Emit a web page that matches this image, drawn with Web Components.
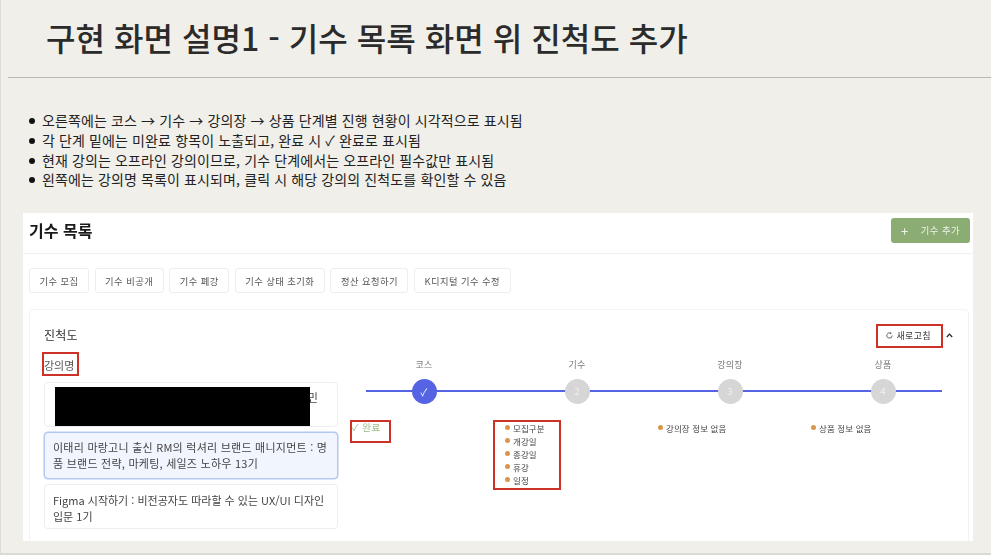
<!DOCTYPE html>
<html lang="ko">
<head>
<meta charset="utf-8">
<title>구현 화면 설명1</title>
<style>
  html, body { margin: 0; height: 100%; }
  body {
    width: 991px; height: 555px; overflow: hidden; box-sizing: border-box;
    background: #f0efea; color: #222;
    font-family: "Noto Sans CJK KR", "Noto Sans", sans-serif;
    border-left: 1px solid #dcdcd8; border-bottom: 2px solid #d9d9d5;
  }
</style>
</head>
<body>
<slide-title>구현 화면 설명1 - 기수 목록 화면 위 진척도 추가</slide-title>
<bullet-list>
  <li>오른쪽에는 코스 → 기수 → 강의장 → 상품 단계별 진행 현황이 시각적으로 표시됨</li>
  <li>각 단계 밑에는 미완료 항목이 노출되고, 완료 시 ✓ 완료로 표시됨</li>
  <li>현재 강의는 오프라인 강의이므로, 기수 단계에서는 오프라인 필수값만 표시됨</li>
  <li>왼쪽에는 강의명 목록이 표시되며, 클릭 시 해당 강의의 진척도를 확인할 수 있음</li>
</bullet-list>
<cohort-screen></cohort-screen>

<script>
class SlideTitle extends HTMLElement {
  constructor() {
    super();
    this.attachShadow({ mode: 'open' }).innerHTML = `
      <style>
        :host { display: block; margin-left: 7px; height: 77px; border-bottom: 1px solid #b9b9b4; box-sizing: content-box; }
        h1 { margin: 0; padding: 14px 0 0 38px; font-size: 32.1px; line-height: 46px; font-weight: 500; color: #2b2b2b; white-space: nowrap; }
      </style>
      <h1><slot></slot></h1>`;
  }
}
customElements.define('slide-title', SlideTitle);

class BulletList extends HTMLElement {
  constructor() {
    super();
    this.attachShadow({ mode: 'open' }).innerHTML = `
      <style>
        :host { display: block; padding: 33px 0 0 28px; height: 102px; box-sizing: content-box; }
        ::slotted(li) { list-style: none; font-size: 14px; line-height: 19.8px; color: #222; position: relative; padding-left: 13px; letter-spacing: .12px; white-space: nowrap; }
        ::slotted(li)::before { content: ""; position: absolute; left: 0; top: 7px; width: 6px; height: 6px; border-radius: 50%; background: #111; }
      </style>
      <slot></slot>`;
  }
}
customElements.define('bullet-list', BulletList);

class TagButton extends HTMLElement {
  constructor() {
    super();
    this.attachShadow({ mode: 'open' }).innerHTML = `
      <style>
        :host { display: inline-flex; align-items: center; height: 25px; padding: 0 9.5px; box-sizing: border-box; background: #fff; border: 1px solid #eeeeee; border-radius: 3px; font-size: 9.3px; letter-spacing: .45px; color: #555; white-space: nowrap; }
      </style>
      <slot></slot>`;
  }
}
customElements.define('tag-button', TagButton);

class RedBox extends HTMLElement {
  constructor() {
    super();
    this.attachShadow({ mode: 'open' }).innerHTML = `
      <style>
        :host { position: absolute; box-sizing: border-box; border: 2px solid #cc3226; pointer-events: none; }
      </style>`;
  }
}
customElements.define('red-box', RedBox);

class CourseCard extends HTMLElement {
  constructor() {
    super();
    this.attachShadow({ mode: 'open' }).innerHTML = `
      <style>
        :host { display: block; box-sizing: border-box; padding: 7px 8px; background: #fff; border: 1px solid #eeeeee; border-radius: 4px; font-size: 11px; line-height: 15.5px; letter-spacing: .24px; color: #444; }
        :host([active]) { background: #f1f5fe; border: 1px solid #b3c8f2; box-shadow: 0 0 0 .5px #b3c8f2; height: 47px; padding: 7px 8px; }
      </style>
      <slot></slot>`;
  }
}
customElements.define('course-card', CourseCard);

class StepItem extends HTMLElement {
  constructor() {
    super();
    this.attachShadow({ mode: 'open' }).innerHTML = `
      <style>
        :host { display: block; width: 153px; position: relative; }
        .label { height: 16px; line-height: 16px; font-size: 9px; letter-spacing: .3px; color: #777; text-align: center; }
        .circle { width: 25px; height: 25px; margin: 6px auto 0; border-radius: 50%; background: #d6d6d6; color: #f1f1f1; font-size: 9px; line-height: 25px; text-align: center; position: relative; }
        :host([done]) .circle { background: #5664e4; color: #fff; font-size: 10px; }
        .detail { margin-top: 17px; padding-left: 4.5px; }
      </style>
      <div class="label"></div>
      <div class="circle"></div>
      <div class="detail"><slot></slot></div>`;
    this.shadowRoot.querySelector('.label').textContent = this.getAttribute('label');
    this.shadowRoot.querySelector('.circle').textContent = this.getAttribute('mark');
  }
}
customElements.define('step-item', StepItem);

class MissingItem extends HTMLElement {
  constructor() {
    super();
    this.attachShadow({ mode: 'open' }).innerHTML = `
      <style>
        :host { display: flex; align-items: center; gap: 3px; height: 13px; font-size: 8.5px; letter-spacing: .1px; color: #444; white-space: nowrap; }
        i { width: 5px; height: 5px; border-radius: 50%; background: #d9964a; flex: none; }
      </style>
      <i></i><slot></slot>`;
  }
}
customElements.define('missing-item', MissingItem);

class CohortScreen extends HTMLElement {
  constructor() {
    super();
    this.attachShadow({ mode: 'open' }).innerHTML = `
      <style>
        :host { display: block; width: 950px; height: 328px; margin-left: 22px; background: #fff; position: relative; overflow: hidden; color: #222; filter: blur(.25px); }
        .head { box-sizing: border-box; display: flex; align-items: center; justify-content: space-between; padding: 0 3px 0 6px; border-bottom: 1px solid #f0f0f0; height: 41px; }
        .head b { font-size: 16px; font-weight: 700; color: #1a1a1a; margin-top: -7px; }
        .add { width: 79px; height: 25px; margin-top: -6px; background: #8bad74; border-radius: 3px; color: #eef3e9; font-size: 9.3px; letter-spacing: .5px; display: flex; align-items: center; gap: 12px; padding-left: 10px; box-sizing: border-box; }
        .add span:first-child { font-size: 13px; line-height: 1; }
        .tags { display: flex; gap: 5.5px; padding: 14px 6px 0; }
        .panel { position: absolute; left: 6px; top: 96px; width: 940px; height: 240px; box-sizing: border-box; border: 1px solid #f3f3f3; border-radius: 4px; padding: 0 14px; }
        .top { display: flex; align-items: center; justify-content: space-between; height: 48px; box-sizing: border-box; }
        .top > span { font-size: 12px; color: #333; letter-spacing: .2px; }
        .tools { display: flex; align-items: center; font-size: 9px; color: #333; letter-spacing: .35px; margin-top: 2px; }
        .tools .ref { display: flex; align-items: center; gap: 3px; margin-right: 15px; white-space: nowrap; }
        .tools .ref svg { display: block; }
        .tools .chev { display: block; margin-right: 1px; }
        .body { display: flex; }
        .left { width: 294px; flex: none; margin-top: 0; }
        .left > div.cap { font-size: 11px; line-height: 15px; color: #555; height: 20px; }
        .cards { display: flex; flex-direction: column; gap: 5px; margin-top: 4px; }
        .cards course-card:nth-child(1) { height: 45px; text-align: right; position: relative; padding-right: 19px; }
        .cards course-card:nth-child(3) { height: 45px; padding-top: 8px; letter-spacing: 0; }
        .right { margin-left: 9.5px; position: relative; margin-top: -1px; }
        .line { position: absolute; left: 18.5px; top: 33px; width: 576px; height: 2px; background: #5664e4; }
        .steps { display: flex; position: relative; }
        .ok { font-size: 9.5px; color: #9cbe88; letter-spacing: .5px; line-height: 13px; margin-top: 1px; }
        .mask { position: absolute; left: 10px; top: 4px; width: 255px; height: 39px; background: #000; }
      </style>
      <div class="head">
        <b>기수 목록</b>
        <div class="add"><span>+</span><span>기수 추가</span></div>
      </div>
      <div class="tags">
        <tag-button>기수 모집</tag-button>
        <tag-button>기수 비공개</tag-button>
        <tag-button>기수 폐강</tag-button>
        <tag-button>기수 상태 초기화</tag-button>
        <tag-button>정산 요청하기</tag-button>
        <tag-button>K디지털 기수 수정</tag-button>
      </div>
      <div class="panel">
        <div class="top">
          <span>진척도</span>
          <div class="tools">
            <div class="ref">
              <svg width="7" height="7" viewBox="0 0 8 8"><path d="M5.4 1.3A3 3 0 1 0 7 4" fill="none" stroke="#555" stroke-width="1"/><path d="M5 0 6.6 1.8 4.6 2.6Z" fill="#555"/></svg>
              <span>새로고침</span>
            </div>
            <svg class="chev" width="7" height="5" viewBox="0 0 7 5"><path d="M.8 4 3.5 1.2 6.2 4" fill="none" stroke="#222" stroke-width="1.2"/></svg>
          </div>
        </div>
        <div class="body">
          <div class="left">
            <div class="cap">강의명</div>
            <div class="cards">
              <course-card>민<div class="mask"></div></course-card>
              <course-card active>이태리 마랑고니 출신 RM의 럭셔리 브랜드 매니지먼트 : 명품 브랜드 전략, 마케팅, 세일즈 노하우 13기</course-card>
              <course-card>Figma 시작하기 : 비전공자도 따라할 수 있는 UX/UI 디자인 입문 1기</course-card>
            </div>
          </div>
          <div class="right">
            <div class="line"></div>
            <div class="steps">
              <step-item label="코스" mark="✓" done>
                <div class="ok">✓ 완료</div>
              </step-item>
              <step-item label="기수" mark="2">
                <missing-item>모집구분</missing-item>
                <missing-item>개강일</missing-item>
                <missing-item>종강일</missing-item>
                <missing-item>휴강</missing-item>
                <missing-item>일정</missing-item>
              </step-item>
              <step-item label="강의장" mark="3">
                <missing-item>강의장 정보 없음</missing-item>
              </step-item>
              <step-item label="상품" mark="4">
                <missing-item>상품 정보 없음</missing-item>
              </step-item>
            </div>
          </div>
        </div>
      </div>
      <red-box style="left:853px;top:111px;width:67px;height:24px"></red-box>
      <red-box style="left:19px;top:139px;width:37px;height:24px"></red-box>
      <red-box style="left:327px;top:207px;width:41px;height:23px"></red-box>
      <red-box style="left:470px;top:207px;width:68px;height:70px"></red-box>`;
  }
}
customElements.define('cohort-screen', CohortScreen);
</script>
</body>
</html>
